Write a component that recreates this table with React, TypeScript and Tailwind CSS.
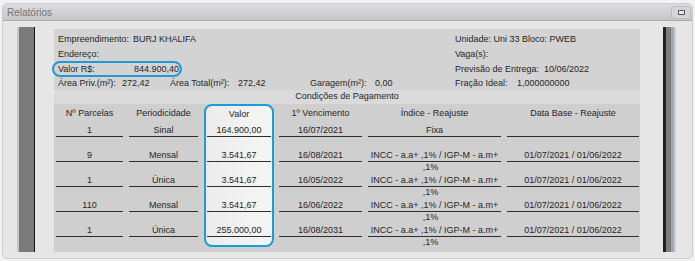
import React from "react";

type Row = {
	parcelas: string;
	periodicidade: string;
	valor: string;
	vencimento: string;
	indice: string;
	indiceExtra?: string;
	dataBase: string;
};

const rows: Row[] = [
	{ parcelas: "1", periodicidade: "Sinal", valor: "164.900,00", vencimento: "16/07/2021", indice: "Fixa", dataBase: "" },
	{ parcelas: "9", periodicidade: "Mensal", valor: "3.541,67", vencimento: "16/08/2021", indice: "INCC - a.a+ ,1% / IGP-M - a.m+", indiceExtra: ",1%", dataBase: "01/07/2021 / 01/06/2022" },
	{ parcelas: "1", periodicidade: "Única", valor: "3.541,67", vencimento: "16/05/2022", indice: "INCC - a.a+ ,1% / IGP-M - a.m+", indiceExtra: ",1%", dataBase: "01/07/2021 / 01/06/2022" },
	{ parcelas: "110", periodicidade: "Mensal", valor: "3.541,67", vencimento: "16/06/2022", indice: "INCC - a.a+ ,1% / IGP-M - a.m+", indiceExtra: ",1%", dataBase: "01/07/2021 / 01/06/2022" },
	{ parcelas: "1", periodicidade: "Única", valor: "255.000,00", vencimento: "16/08/2031", indice: "INCC - a.a+ ,1% / IGP-M - a.m+", indiceExtra: ",1%", dataBase: "01/07/2021 / 01/06/2022" },
];

type ColProps = {
	title: string;
	width: string;
	values: string[];
	extras?: (string | undefined)[];
};

// one table column: header, then each row is an underlined line + a sub line
const Column = ({ title, width, values, extras }: ColProps) => (
	<div className={`flex flex-col shrink-0 ${width}`}>
		<div className="h-[20px] shrink-0 flex items-center justify-center">{title}</div>
		{values.map((v, i) => (
			<div key={i} className="flex flex-col shrink-0">
				<div className="h-[13px] shrink-0 border-b border-[#2e2e2e] flex items-end justify-center leading-[11px] whitespace-nowrap">
					{v}
				</div>
				<div className="h-[12px] shrink-0 flex items-start justify-center leading-[11px] pr-[8px]">
					{extras ? extras[i] : ""}
				</div>
			</div>
		))}
	</div>
);

export default function App() {
	return (
		<div
			className="w-[695px] h-[261px] bg-[#f2f2f2] pt-[3px] px-[2px] text-[9px] text-[#262626]"
			style={{ fontFamily: '"Liberation Sans", Arial, sans-serif' }}
		>
			<div className="h-[256px] rounded-[5px] border border-[#cdcdcd] bg-[#e6e6e6] overflow-hidden">
				{/* title bar */}
				<div className="h-[17px] flex items-center justify-between bg-[linear-gradient(#dcdce0,#c6c6ca)] border-b border-[#a9a9ad] pl-[4px] pr-[1px]">
					<span className="text-[10px] text-[#737373]">Relatórios</span>
					<div className="w-[20px] h-[13px] rounded-[3px] bg-[#d5d5d7] border border-[#bdbdc0] flex items-center justify-center">
						<div className="w-[7px] h-[5px] border border-[#5c5c5c] bg-[#e8e8e8]" />
					</div>
				</div>

				{/* body */}
				<div className="flex pt-[6px] pl-[14px]">
					<div className="w-[18px] h-[225px] shrink-0 bg-[#7b7b7b] border-l-2 border-[#c6c6c6] border-r border-r-[#111]" />

					<div className="ml-[19px] mt-[2px] w-[586px] h-[223px] shrink-0 flex flex-col">
						{/* info */}
						<div className="h-[61px] shrink-0 bg-[#d3d3d3] flex pl-[4px] pt-[4px]">
							<div className="w-[397px] flex flex-col">
								<div className="h-[14px] flex items-center">
									<span className="w-[75px]">Empreendimento:</span>
									<span>BURJ KHALIFA</span>
								</div>
								<div className="h-[15px] flex items-center">Endereço:</div>
								<div className="h-[15px] flex items-center relative">
									<div className="absolute -left-[6px] -top-[1px] w-[130px] h-[16px] rounded-[8px] border-2 border-[#1d9bd6]" />
									<span className="w-[121px] flex justify-between">
										<span>Valor R$:</span>
										<span>844.900,40</span>
									</span>
								</div>
								<div className="h-[13px] flex items-center">
									<span className="w-[64px]">Área Priv.(m²):</span>
									<span className="w-[48px]">272,42</span>
									<span className="w-[68px]">Área Total(m²):</span>
									<span className="w-[72px]">272,42</span>
									<span className="w-[65px]">Garagem(m²):</span>
									<span>0,00</span>
								</div>
							</div>
							<div className="flex flex-col">
								<div className="h-[14px] flex items-center">Unidade: Uni 33 Bloco: PWEB</div>
								<div className="h-[15px] flex items-center">Vaga(s):</div>
								<div className="h-[15px] flex items-center">
									<span className="w-[89px]">Previsão de Entrega:</span>
									<span>10/06/2022</span>
								</div>
								<div className="h-[13px] flex items-center">
									<span className="w-[62px]">Fração Ideal:</span>
									<span>1,000000000</span>
								</div>
							</div>
						</div>

						{/* section title */}
						<div className="h-[14px] shrink-0 bg-[#dadada] flex items-center justify-center">Condições de Pagamento</div>

						{/* table */}
						<div className="h-[148px] shrink-0 bg-[#cfcfcf] flex items-start pl-[2px]">
							<Column title="Nº Parcelas" width="w-[67px]" values={rows.map((r) => r.parcelas)} />
							<div className="w-[6px] shrink-0" />
							<Column title="Periodicidade" width="w-[69px]" values={rows.map((r) => r.periodicidade)} />
							<div className="w-[6px] shrink-0" />
							<div className="w-[70px] h-[143px] shrink-0 rounded-[8px] border-2 border-[#1d9bd6] bg-[linear-gradient(to_right,#ececec,#f5f5f5)] px-[1px] flex flex-col">
								<div className="h-[18px] shrink-0 flex items-center justify-center">Valor</div>
								{rows.map((r, i) => (
									<div key={i} className="flex flex-col shrink-0">
										<div className="h-[13px] shrink-0 border-b border-[#2e2e2e] flex items-end justify-center leading-[11px]">
											{r.valor}
										</div>
										{i < rows.length - 1 && <div className="h-[12px] shrink-0" />}
									</div>
								))}
							</div>
							<div className="w-[5px] shrink-0" />
							<Column title="1º Vencimento" width="w-[83px]" values={rows.map((r) => r.vencimento)} />
							<div className="w-[6px] shrink-0" />
							<Column
								title="Índice - Reajuste"
								width="w-[133px]"
								values={rows.map((r) => r.indice)}
								extras={rows.map((r) => r.indiceExtra)}
							/>
							<div className="w-[6px] shrink-0" />
							<Column title="Data Base - Reajuste" width="w-[132px]" values={rows.map((r) => r.dataBase)} />
						</div>
					</div>

					<div className="ml-[23px] w-[13px] h-[225px] shrink-0 bg-[linear-gradient(to_right,#202020_0,#202020_3px,#7e7e7e_3px,#7e7e7e_8px,#a6a6a6_8px,#a6a6a6_11px,#c9cde3_11px)]" />
				</div>
			</div>
		</div>
	);
}
